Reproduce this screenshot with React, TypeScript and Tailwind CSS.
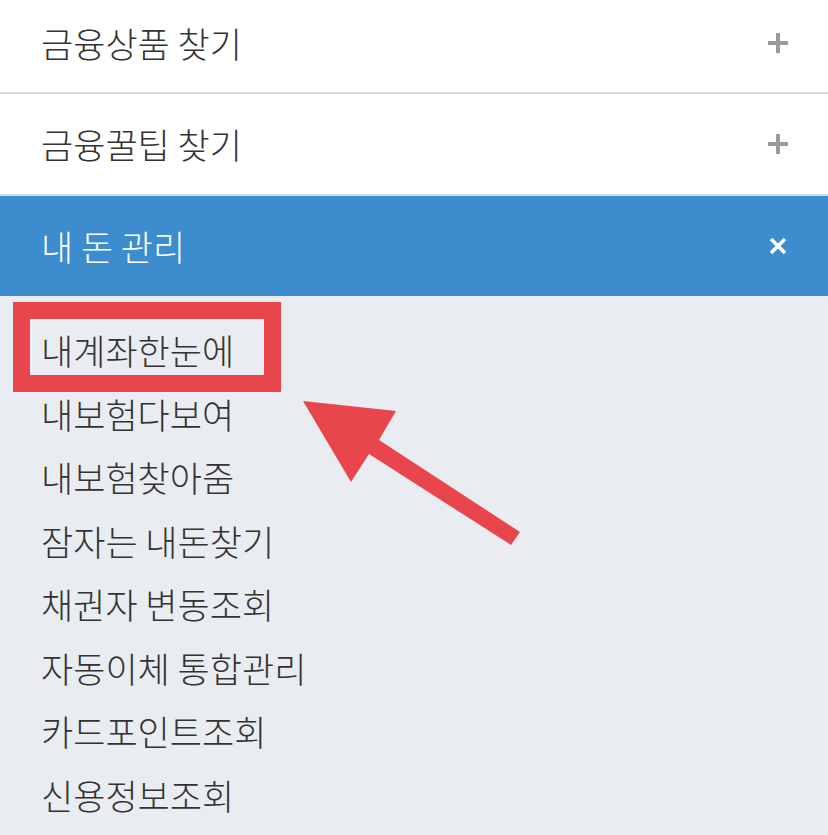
const font = "font-['Noto_Sans_CJK_KR','Noto_Sans',sans-serif]";

const subMenus = [
  "내계좌한눈에",
  "내보험다보여",
  "내보험찾아줌",
  "잠자는 내돈찾기",
  "채권자 변동조회",
  "자동이체 통합관리",
  "카드포인트조회",
  "신용정보조회",
];

function PlusIcon() {
  return (
    <svg width="20" height="20" viewBox="0 0 20 20">
      <rect x="8" y="0" width="4" height="20" fill="#9a9a9a" />
      <rect x="0" y="8" width="20" height="4" fill="#9a9a9a" />
    </svg>
  );
}

function CloseIcon() {
  return (
    <svg width="18" height="18" viewBox="0 0 18 18">
      <path d="M2 2 L16 16 M16 2 L2 16" stroke="#fff" strokeWidth="3.6" />
    </svg>
  );
}

export default function App() {
  return (
    <main className={`relative min-h-[835px] w-[828px] overflow-hidden bg-[#e9ecf1] ${font}`}>
      <div className="flex h-[94px] items-center justify-between border-b-2 border-[#d9d9d9] bg-white pl-[41px] pr-[40px] pb-[6px]">
        <span className="text-[35px] font-light text-[#333]">금융상품 찾기</span>
        <PlusIcon />
      </div>
      <div className="flex h-[102px] items-center justify-between border-b-2 border-[#d9d9d9] bg-white pl-[41px] pr-[40px]">
        <span className="text-[35px] font-light text-[#333]">금융꿀팁 찾기</span>
        <PlusIcon />
      </div>
      <div className="flex h-[100px] items-center justify-between bg-[#3d8ccd] pl-[41px] pr-[41px]">
        <span className="text-[35px] font-light text-white">내 돈 관리</span>
        <CloseIcon />
      </div>

      <ul className="pt-[22px] pl-[41px]">
        {subMenus.map((menu) => (
          <li key={menu} className="text-[35px] font-light leading-[63.5px] text-[#333]">
            {menu}
          </li>
        ))}
      </ul>

      {/* annotation */}
      <div className="absolute left-[13px] top-[302px] h-[90px] w-[268px] border-[17px] border-[#e8464c]" />
      <svg className="absolute left-0 top-0" width="828" height="835">
        <polygon
          points="303,401 396,411 379,440 520,532 511,545 369,454 351,482"
          fill="#e8464c"
        />
      </svg>
    </main>
  );
}
